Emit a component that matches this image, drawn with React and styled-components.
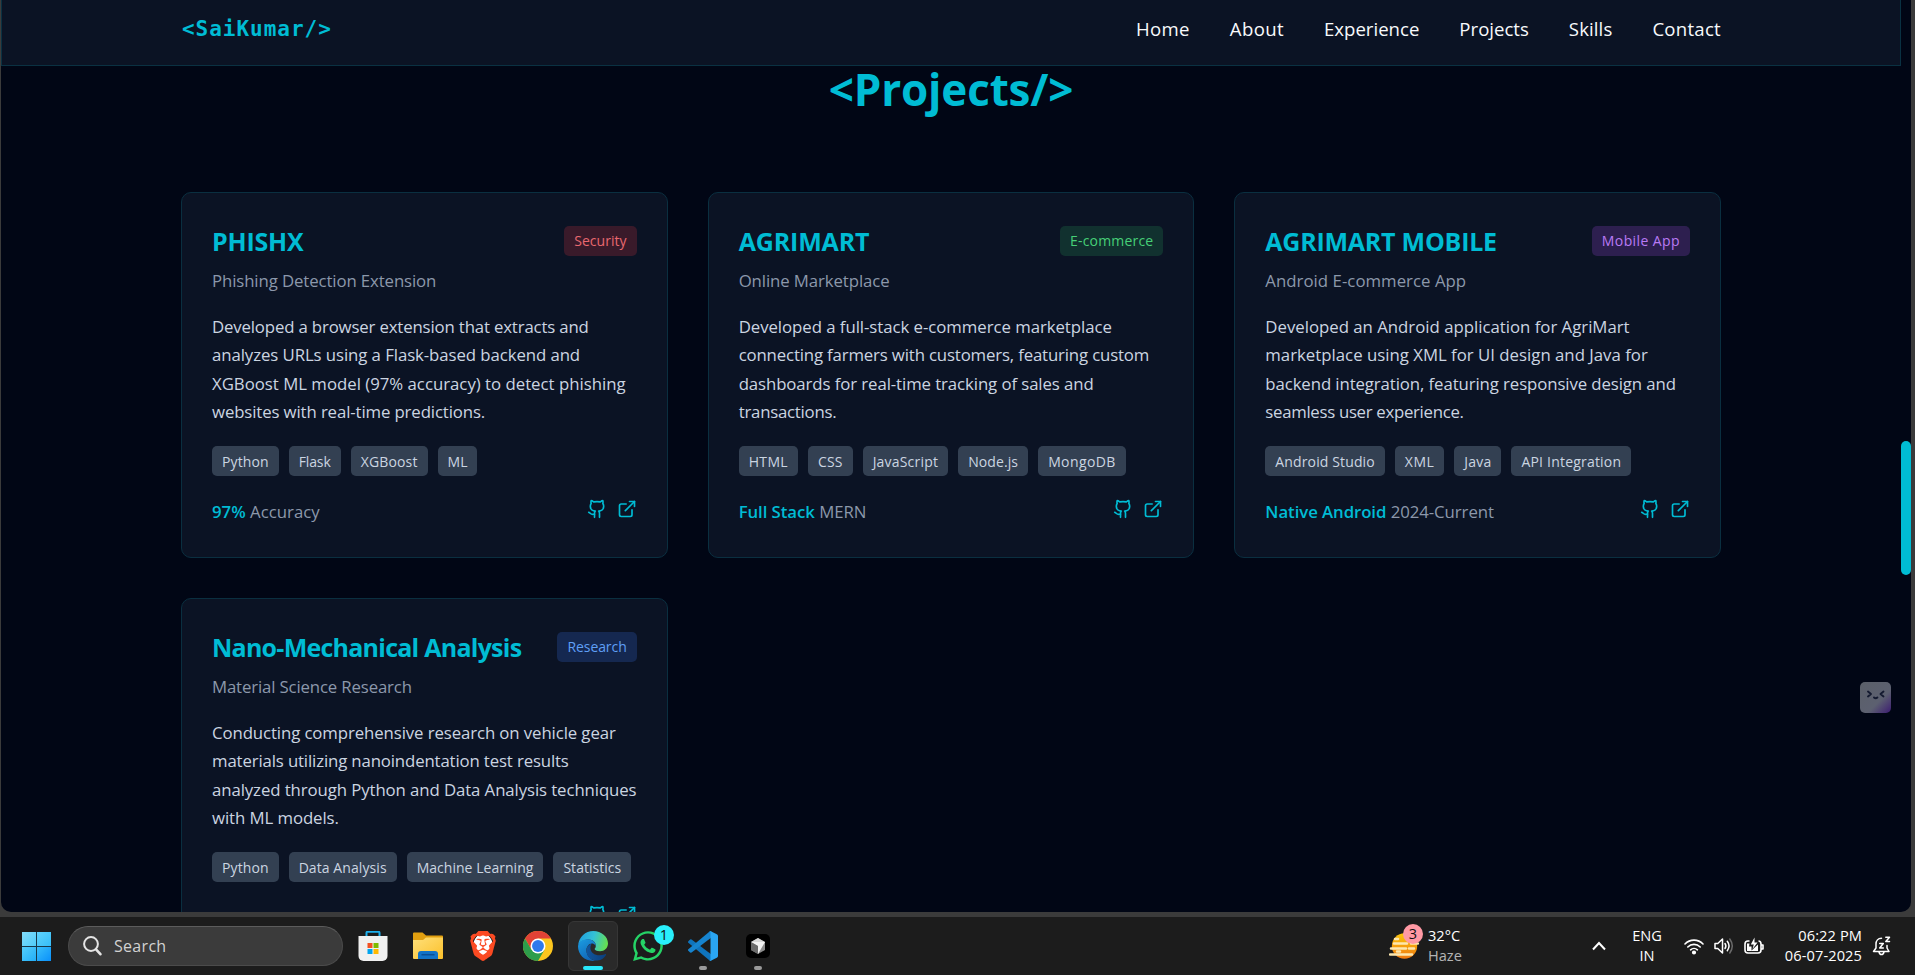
import React from "react";
import styled, { createGlobalStyle } from "styled-components";
import { Github, ExternalLink } from "lucide-react";
import { FaWhatsapp } from "react-icons/fa";
import { SiBrave } from "react-icons/si";

const GlobalStyle = createGlobalStyle`
  * { box-sizing: border-box; }
  body {
    margin: 0;
    background: #1c1c1c;
    font-family: "Open Sans", "Noto Sans", sans-serif;
    overflow: hidden;
  }
`;

const Desktop = styled.div`
  display: flex;
  flex-direction: column;
  width: 1915px;
  height: 975px;
  overflow: hidden;
`;

const WindowFrame = styled.div`
  flex: none;
  height: 917px;
  padding: 0 4px 5px 1px;
  background: #3b3b3b;
`;

const Viewport = styled.div`
  display: flex;
  height: 912px;
  overflow: hidden;
  background: #010615;
  border-radius: 0 0 10px 10px;
`;

const Page = styled.div`
  position: relative;
  width: 1900px;
  height: 912px;
  overflow: hidden;
`;

const ScrollTrack = styled.div`
  flex: 1;
  padding-top: 441px;
`;

const ScrollThumb = styled.div`
  height: 134px;
  border-radius: 5px;
  background: #00bcd4;
`;

const Header = styled.header`
  height: 66px;
  padding: 0 179px 8px 180px;
  display: flex;
  align-items: center;
  justify-content: space-between;
  background: #0b1324;
  border: 1px solid #0a3142;
  border-top: 0;
`;

const Logo = styled.div`
  font: 700 21px/30px "DejaVu Sans Mono", monospace;
  letter-spacing: 0.98px;
  color: #00bcd4;
`;

const Nav = styled.nav`
  display: flex;
  gap: 40px;
`;

const NavLink = styled.a`
  font-size: 18.6px;
  line-height: 30px;
  font-weight: 500;
  color: #f8fafc;
  letter-spacing: ${(p) => p.$track || 0}px;
  white-space: nowrap;
`;

const Heading = styled.h2`
  margin: 0;
  font-size: 44px;
  line-height: 47px;
  font-weight: 700;
  text-align: center;
  color: #00bcd4;
  letter-spacing: -0.15px;
`;

const Grid = styled.div`
  display: grid;
  grid-template-columns: repeat(3, minmax(0, 1fr));
  gap: 40px;
  width: 1540px;
  margin: 79px auto 0;
`;

const Card = styled.article`
  height: 366px;
  padding: 30px;
  background: #0b1324;
  border: 1px solid #0a2f40;
  border-radius: 10px;
`;

const CardTop = styled.div`
  display: flex;
  align-items: center;
  justify-content: space-between;
  height: 36px;
`;

const CardTitle = styled.h3`
  margin: 0;
  font-size: 25px;
  line-height: 36px;
  font-weight: 700;
  color: #00bcd4;
  white-space: nowrap;
  letter-spacing: ${(p) => p.$track || 0}px;
`;

const tones = {
  red: ["#e8686f", "#391a2a"],
  green: ["#46cf77", "#11312f"],
  purple: ["#b97af5", "#2d1f4f"],
  blue: ["#5f9ff6", "#152850"],
};

const Badge = styled.span`
  padding: 0 10px;
  border-radius: 5px;
  font-size: 14px;
  line-height: 30px;
  white-space: nowrap;
  color: ${(p) => tones[p.$tone][0]};
  background: ${(p) => tones[p.$tone][1]};
  letter-spacing: ${(p) => p.$track || 0}px;
`;

const Subtitle = styled.p`
  margin: 8px 0 0;
  font-size: 16.8px;
  line-height: 28px;
  color: #8c98ab;
  letter-spacing: ${(p) => p.$track || 0}px;
`;

const Description = styled.div`
  margin-top: 18px;
  font-size: 16.8px;
  line-height: 28.3px;
  color: #cbd5e1;
`;

const Line = styled.div`
  white-space: nowrap;
  letter-spacing: ${(p) => p.$track || 0}px;
`;

const Chips = styled.div`
  display: flex;
  gap: 10px;
  margin-top: 20px;
`;

const Chip = styled.span`
  padding: 1px 10px 0;
  border-radius: 5px;
  font-size: 14px;
  line-height: 29px;
  color: #cbd5e1;
  background: #334052;
  white-space: nowrap;
  letter-spacing: ${(p) => p.$track || 0}px;
`;

const CardFooter = styled.div`
  display: flex;
  justify-content: space-between;
  margin-top: 22px;
  font-size: 16.8px;
  line-height: 28px;
  color: #8c98ab;
`;

const Metric = styled.span`
  letter-spacing: ${(p) => p.$track || 0}px;
`;

const Strong = styled.span`
  font-weight: 600;
  color: #00bcd4;
`;

const CardLinks = styled.div`
  display: flex;
  gap: 10px;
  padding-top: 1px;
  color: #00bcd4;
`;

const Assistant = styled.div`
  position: absolute;
  left: 1859px;
  top: 682px;
  width: 31px;
  height: 31px;
  border-radius: 5px;
  background: linear-gradient(135deg, #5b6069 0%, #5c6070 62%, #3c1c72 100%);
`;

const TaskbarRow = styled.footer`
  flex: 1;
  display: flex;
  justify-content: space-between;
  padding: 0 24px 0 22px;
  background: #1c1c1c;
  color: #fff;
`;

const TaskGroup = styled.div`
  display: flex;
  align-items: center;
`;

const StartIcon = styled.div`
  display: grid;
  grid-template-columns: 14px 14px;
  grid-template-rows: 14px 14px;
  gap: 1px;
  margin-right: 17px;
  background: #17384a;
`;

const StartPane = styled.i`
  background: ${(p) => p.$fill};
`;

const SearchBox = styled.div`
  display: flex;
  align-items: center;
  gap: 12px;
  width: 275px;
  height: 40px;
  padding-left: 14px;
  margin-right: 5px;
  border: 1px solid #4b4b4b;
  border-top-color: #5c5c5c;
  border-radius: 20px;
  background: #3b3b3b;
  font-size: 16px;
  letter-spacing: 0.3px;
  color: #d2d2d2;
`;

const TaskButton = styled.div`
  position: relative;
  display: flex;
  align-items: center;
  justify-content: center;
  width: 50px;
  height: 50px;
  margin-right: 5px;
  border-radius: 6px;
  border: 1px solid ${(p) => (p.$active ? "#363636" : "transparent")};
  background: ${(p) => (p.$active ? "#2a2a2a" : "transparent")};

  &::after {
    content: "";
    position: absolute;
    bottom: 0;
    width: ${(p) => (p.$active ? 20 : p.$running ? 8 : 0)}px;
    height: 4px;
    border-radius: 2px;
    background: ${(p) => (p.$active ? "#29e8fb" : "#9a9a9a")};
  }
`;

const LionFace = styled.span`
  display: flex;
  background: radial-gradient(ellipse 10px 12px at 50% 48%, #fff 92%, transparent 100%);
`;

const CountBadge = styled.span`
  position: absolute;
  top: ${(p) => p.$top}px;
  right: ${(p) => p.$right}px;
  width: 20px;
  height: 20px;
  border-radius: 50%;
  background: ${(p) => p.$fill};
  color: #111;
  font-size: 14.5px;
  line-height: 20px;
  text-align: center;
`;

const Weather = styled.div`
  position: relative;
  display: flex;
  align-items: center;
  gap: 9px;
  margin-right: 130px;
`;

const Stack = styled.div`
  padding-bottom: 3px;
  font-size: 14.6px;
  line-height: 20px;
  text-align: ${(p) => p.$align || "left"};
  width: ${(p) => p.$width}px;
  letter-spacing: ${(p) => p.$track || 0}px;
  white-space: nowrap;
`;

const Muted = styled.div`
  color: #b4b4b4;
`;

const Tray = styled.div`
  display: flex;
  align-items: center;
  gap: 10px;
  margin-left: ${(p) => p.$before}px;
`;

const StartLogo = () => (
  <StartIcon>
    <StartPane $fill="linear-gradient(135deg,#82dcfb,#4fcbf8)" />
    <StartPane $fill="linear-gradient(135deg,#5fd2fb,#36bdf8)" />
    <StartPane $fill="linear-gradient(135deg,#54cdfa,#22aef8)" />
    <StartPane $fill="linear-gradient(135deg,#38bffa,#0a90fa)" />
  </StartIcon>
);

const SearchGlyph = () => (
  <svg width="19" height="20" viewBox="0 0 19 20" fill="none" stroke="#e4e4e4" strokeLinecap="round">
    <circle cx="8" cy="8" r="6.9" strokeWidth="2" />
    <path d="M13 13.4l4.4 4.8" strokeWidth="2.6" />
  </svg>
);

const StoreIcon = () => (
  <svg width="30" height="30" viewBox="0 0 30 30">
    <path d="M8.5 6V1.8a1 1 0 0 1 1-1h11a1 1 0 0 1 1 1V6" fill="none" stroke="#1db0ee" strokeWidth="2" />
    <path d="M.5 5h29v20a5 5 0 0 1-5 5h-19a5 5 0 0 1-5-5z" fill="#f0f0f0" />
    <path d="M9.5 12h5v5h-5z" fill="#f25022" />
    <path d="M15.500 12h5v5h-5z" fill="#7fba00" />
    <path d="M9.500 18h5v5h-5z" fill="#00a4ef" />
    <path d="M15.500 18h5v5h-5z" fill="#ffb900" />
  </svg>
);

const FolderIcon = () => (
  <svg width="30" height="28" viewBox="0 0 30 28">
    <defs>
      <linearGradient id="folder" x1="0" y1="0" x2="1" y2="1">
        <stop offset="0" stopColor="#ffe07a" />
        <stop offset="1" stopColor="#fbc02a" />
      </linearGradient>
    </defs>
    <path d="M0 1.500Q0 .5 1 .5h8.500l3.500 3h16q1 0 1 1V10H0z" fill="#e2a010" />
    <path d="M0 8h10l3-2.500h17V26q0 1-1 1H1q-1 0-1-1z" fill="url(#folder)" />
    <path d="M5 27v-5q0-3 3-3h14q3 0 3 3v5z" fill="#1173c8" />
    <path d="M8.500 22.700h13" stroke="#0a4f96" strokeWidth="1.500" />
  </svg>
);

const ChromeIcon = () => (
  <svg width="30" height="30" viewBox="0 0 48 48">
    <circle cx="24" cy="24" r="24" fill="#fcc61e" />
    <path d="M24 12h20.800A24 24 0 0 0 3.200 12L13.600 30z" fill="#e24236" />
    <path d="M34.400 30L24 48A24 24 0 0 1 3.200 12l10.400 18z" fill="#2d9d4b" />
    <circle cx="24" cy="24" r="12" fill="#fff" />
    <circle cx="24" cy="24" r="9.500" fill="#2f79ec" />
  </svg>
);

const EdgeIcon = () => (
  <svg width="30" height="30" viewBox="0 0 256 256">
    <defs>
      <linearGradient id="edgeTop" x1="0" y1=".3" x2="1" y2=".5">
        <stop offset="0" stopColor="#1f9fe0" />
        <stop offset=".5" stopColor="#34c1d6" />
        <stop offset="1" stopColor="#66e04e" />
      </linearGradient>
      <linearGradient id="edgeMid" x1="0" y1="0" x2=".5" y2="1">
        <stop offset="0" stopColor="#1b9de2" />
        <stop offset="1" stopColor="#1167b8" />
      </linearGradient>
      <linearGradient id="edgeLow" x1="0" y1="0" x2="1" y2="0">
        <stop offset="0" stopColor="#10569f" />
        <stop offset="1" stopColor="#0b3f7c" />
      </linearGradient>
    </defs>
    <path d="M2 118C10 50 62 0 130 0c70 0 126 48 126 106 0 38-30 66-68 66-30 0-46-10-46-18 0-6 10-8 10-28 0-30-26-54-62-54C50 72 14 92 2 118z" fill="url(#edgeTop)" />
    <path d="M0 132C2 88 42 70 84 70c40 0 68 26 68 58-10-18-24-22-34-22-22 0-46 24-46 58 0 46 34 80 76 90-86 10-148-50-148-122z" fill="url(#edgeMid)" />
    <path d="M118 106c-26 8-46 30-46 62 0 50 46 88 94 84 34-4 60-24 72-46 4-8-2-10-8-8-66 26-124-8-124-54 0-16 6-30 12-38z" fill="url(#edgeLow)" />
  </svg>
);

const VsCodeIcon = () => (
  <svg width="30" height="30" viewBox="0 0 100 100">
    <path d="M1 34l6-6q2-1 5 0l66 50v20q-4 2-8-1L1 39q-2-2 0-5z" fill="#0f74bd" />
    <path d="M1 66l6 6q2 1 5 0l66-50V2q-4-2-8 1L1 61q-2 2 0 5z" fill="#1684cf" />
    <path d="M76 99q-4 1-6-2 5 2 5-3V6q0-5-5-3 2-3 6-2l20 10q4 2 4 6v66q0 4-4 6z" fill="#2aa5f2" />
  </svg>
);

const CursorIcon = () => (
  <svg width="24" height="24" viewBox="0 0 24 24">
    <rect width="24" height="24" rx="5" fill="#000" />
    <path d="M12 4l7 4v8l-7 4-7-4V8z" fill="#8d8d8d" />
    <path d="M5 8l7-4 7 4-7 4z" fill="#d8d8d8" />
    <path d="M5 8h14l-7 12v-8z" fill="#f2f2f2" />
    <path d="M5 8l7 4v8l-7-4z" fill="#6a6a6a" />
  </svg>
);

const HazeIcon = () => (
  <svg width="30" height="30" viewBox="0 0 30 30">
    <defs>
      <linearGradient id="haze" x1="0" y1="0" x2="0" y2="1">
        <stop offset="0" stopColor="#fbc50a" />
        <stop offset="1" stopColor="#f07a10" />
      </linearGradient>
    </defs>
    <circle cx="15.500" cy="15" r="12.700" fill="url(#haze)" />
    <path d="M6 8h3M5 12.500h13M22 12.500h7M2 17.500h15M20 17.500h5M1 23.500h22M8 20.500h3" stroke="#fde7ae" strokeWidth="2.500" strokeLinecap="round" />
  </svg>
);

const ChevronIcon = () => (
  <svg width="14" height="10" viewBox="0 0 14 10" fill="none" stroke="#fff" strokeWidth="2">
    <path d="M1 8.500L7 2l6 6.500" />
  </svg>
);

const WifiIcon = () => (
  <svg width="20" height="17" viewBox="0 0 20 17" fill="none" stroke="#fff" strokeWidth="1.600" strokeLinecap="round">
    <path d="M1 6a12.500 12.500 0 0 1 18 0M3.800 9a8.700 8.700 0 0 1 12.400 0M6.600 11.800a4.900 4.900 0 0 1 6.800 0" />
    <circle cx="10" cy="14.500" r="1.300" fill="#fff" />
  </svg>
);

const VolumeIcon = () => (
  <svg width="20" height="18" viewBox="0 0 20 18" fill="none" stroke="#fff" strokeWidth="1.500" strokeLinecap="round" strokeLinejoin="round">
    <path d="M1 6.500h2.800L8.500 2v14l-4.700-4.500H1zM11 6.500q1.800 2.500 0 5M13.300 4.300q3.500 4.700 0 9.400" />
    <path d="M15.800 2q5 7 0 14" stroke="#6b6b6b" />
  </svg>
);

const BatteryIcon = () => (
  <svg width="20" height="18" viewBox="0 0 20 18" fill="none" stroke="#fff" strokeWidth="1.600" strokeLinejoin="round">
    <path d="M5.500 4H4Q1 4 1 7v6q0 3 3 3h10q3 0 3-3V7q0-3-2.500-3M17.500 8h1.500v4h-1.500" />
    <path d="M3 6.500h2.500L5 9.500h2.500V13.500L14 7.500v6.500H3z" fill="#fff" stroke="none" />
    <path d="M10.500.500L6.800 7.500h3L8.500 12l5-6.500h-3z" fill="#fff" stroke="none" />
  </svg>
);

const BellIcon = () => (
  <svg width="19" height="20" viewBox="0 0 19 20" fill="none" stroke="#fff" strokeWidth="1.500" strokeLinecap="round" strokeLinejoin="round">
    <path d="M9.500 2.300C6 2.300 4 4.800 4 8v4L1.500 15.500h15.500L15 12V9.500M7 16q.5 2.500 2.500 2.500t2.500-2.500M7.700 7.500h3.600l-3.600 4.500h3.600M13.800 1.200h3.700l-3.700 4.300h3.700" />
  </svg>
);

const AssistantFace = () => (
  <svg width="31" height="31" viewBox="0 0 31 31" fill="none" stroke="#141a30" strokeWidth="1.900" strokeLinecap="round" strokeLinejoin="round">
    <path d="M8 9.500l3 2.500-3 2.500M23.500 9.500l-3 2.500 3 2.500M14 15.500q1.700 1.600 3.400 0" />
  </svg>
);

const navItems = [
  ["Home", 0.3],
  ["About", 0.36],
  ["Experience", 0],
  ["Projects", 0],
  ["Skills", 0.1],
  ["Contact", 0.26],
];

const projects = [
  {
    title: ["PHISHX", -0.2],
    badge: ["Security", "red", 0.05],
    subtitle: ["Phishing Detection Extension", -0.11],
    lines: [
      ["Developed a browser extension that extracts and", -0.156],
      ["analyzes URLs using a Flask-based backend and", -0.08],
      ["XGBoost ML model (97% accuracy) to detect phishing", -0.01],
      ["websites with real-time predictions.", -0.12],
    ],
    chips: [["Python", 0.1], ["Flask", -0.1], ["XGBoost", 0.15], ["ML", 0]],
    metric: ["97%", "Accuracy", 0],
  },
  {
    title: ["AGRIMART", -0.15],
    badge: ["E-commerce", "green", 0.18],
    subtitle: ["Online Marketplace", -0.1],
    lines: [
      ["Developed a full-stack e-commerce marketplace", -0.05],
      ["connecting farmers with customers, featuring custom", -0.155],
      ["dashboards for real-time tracking of sales and", -0.09],
      ["transactions.", -0.23],
    ],
    chips: [["HTML", 0.35], ["CSS", 0.15], ["JavaScript", 0.2], ["Node.js", 0.1], ["MongoDB", 0.4]],
    metric: ["Full Stack", "MERN", -0.07],
  },
  {
    title: ["AGRIMART MOBILE", -0.24],
    badge: ["Mobile App", "purple", 0.4],
    subtitle: ["Android E-commerce App", 0.03],
    lines: [
      ["Developed an Android application for AgriMart", -0.01],
      ["marketplace using XML for UI design and Java for", 0],
      ["backend integration, featuring responsive design and", -0.1],
      ["seamless user experience.", -0.3],
    ],
    chips: [["Android Studio", 0.13], ["XML", 0.5], ["Java", 0.2], ["API Integration", 0.2]],
    metric: ["Native Android", "2024-Current", -0.07],
  },
  {
    title: ["Nano-Mechanical Analysis", -0.75],
    badge: ["Research", "blue", -0.08],
    subtitle: ["Material Science Research", -0.15],
    lines: [
      ["Conducting comprehensive research on vehicle gear", -0.1],
      ["materials utilizing nanoindentation test results", -0.14],
      ["analyzed through Python and Data Analysis techniques", -0.094],
      ["with ML models.", -0.08],
    ],
    chips: [["Python", 0.1], ["Data Analysis", 0.08], ["Machine Learning", 0.03], ["Statistics", 0.03]],
    metric: ["Ongoing", "", 0],
  },
];

const ProjectCard = ({ project }) => (
  <Card>
    <CardTop>
      <CardTitle $track={project.title[1]}>{project.title[0]}</CardTitle>
      <Badge $tone={project.badge[1]} $track={project.badge[2]}>{project.badge[0]}</Badge>
    </CardTop>
    <Subtitle $track={project.subtitle[1]}>{project.subtitle[0]}</Subtitle>
    <Description>
      {project.lines.map(([text, track]) => (
        <Line key={text} $track={track}>{text}</Line>
      ))}
    </Description>
    <Chips>
      {project.chips.map(([text, track]) => (
        <Chip key={text} $track={track}>{text}</Chip>
      ))}
    </Chips>
    <CardFooter>
      <Metric $track={project.metric[2]}>
        <Strong>{project.metric[0]}</Strong> {project.metric[1]}
      </Metric>
      <CardLinks>
        <Github size={20} />
        <ExternalLink size={20} />
      </CardLinks>
    </CardFooter>
  </Card>
);

const Taskbar = () => (
  <TaskbarRow>
    <TaskGroup>
      <StartLogo />
      <SearchBox>
        <SearchGlyph />
        Search
      </SearchBox>
      <TaskButton><StoreIcon /></TaskButton>
      <TaskButton><FolderIcon /></TaskButton>
      <TaskButton>
        <LionFace>
          <SiBrave size={30} color="#fb4a22" />
        </LionFace>
      </TaskButton>
      <TaskButton><ChromeIcon /></TaskButton>
      <TaskButton $active><EdgeIcon /></TaskButton>
      <TaskButton>
        <FaWhatsapp size={34} color="#25d366" />
        <CountBadge $top={3} $right={-2} $fill="#29effb">1</CountBadge>
      </TaskButton>
      <TaskButton $running><VsCodeIcon /></TaskButton>
      <TaskButton $running><CursorIcon /></TaskButton>
    </TaskGroup>
    <TaskGroup>
      <Weather>
        <HazeIcon />
        <CountBadge $top={-1} $right={39} $fill="#ff99a4">3</CountBadge>
        <Stack $width={34}>
          32°C
          <Muted>Haze</Muted>
        </Stack>
      </Weather>
      <ChevronIcon />
      <Tray $before={23}>
        <Stack $width={36} $align="center">
          ENG
          <div>IN</div>
        </Stack>
      </Tray>
      <Tray $before={19}>
        <WifiIcon />
        <VolumeIcon />
        <BatteryIcon />
      </Tray>
      <Tray $before={19}>
        <Stack $width={79} $align="right" $track={0.1}>
          06:22 PM
          <div>06-07-2025</div>
        </Stack>
        <BellIcon />
      </Tray>
    </TaskGroup>
  </TaskbarRow>
);

export default function App() {
  return (
    <Desktop>
      <GlobalStyle />
      <WindowFrame>
        <Viewport>
          <Page>
            <Header>
              <Logo>{"<SaiKumar/>"}</Logo>
              <Nav>
                {navItems.map(([text, track]) => (
                  <NavLink key={text} $track={track}>{text}</NavLink>
                ))}
              </Nav>
            </Header>
            <Heading>{"<Projects/>"}</Heading>
            <Grid>
              {projects.map((project) => (
                <ProjectCard key={project.title[0]} project={project} />
              ))}
            </Grid>
            <Assistant>
              <AssistantFace />
            </Assistant>
          </Page>
          <ScrollTrack>
            <ScrollThumb />
          </ScrollTrack>
        </Viewport>
      </WindowFrame>
      <Taskbar />
    </Desktop>
  );
}
